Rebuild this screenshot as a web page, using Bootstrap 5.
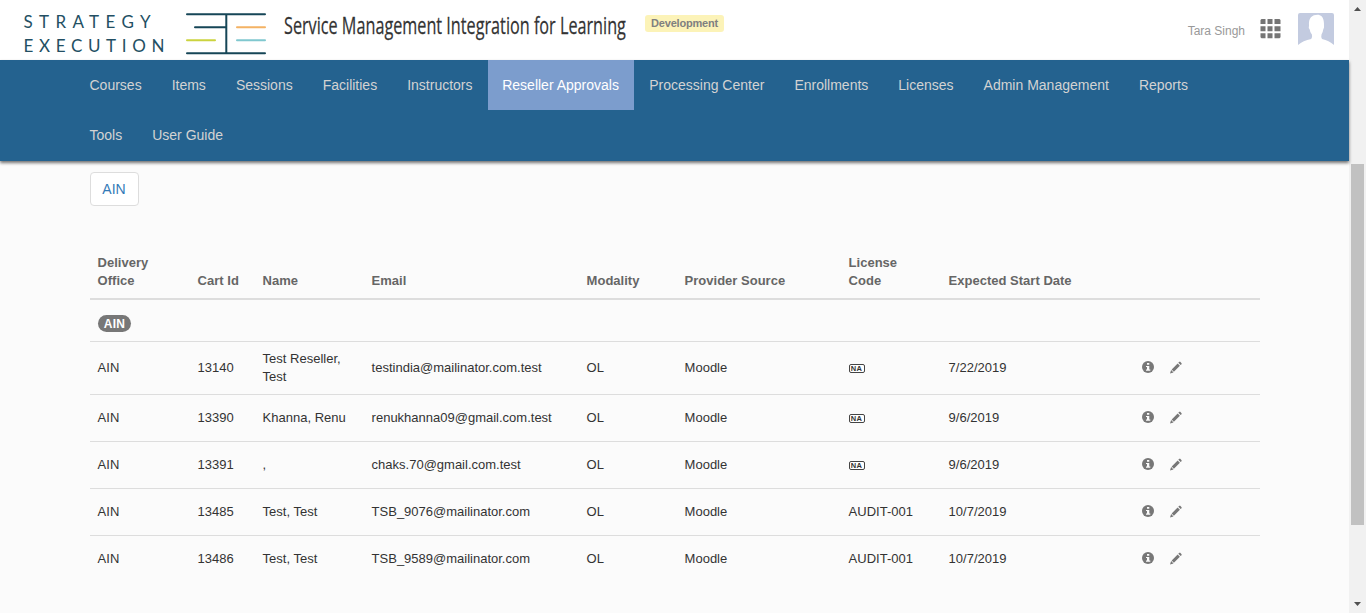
<!DOCTYPE html>
<html lang="en">
<head>
<meta charset="utf-8">
<meta name="viewport" content="width=device-width, initial-scale=1">
<title>Reseller Approvals</title>
<link href="https://cdn.jsdelivr.net/npm/bootstrap@5.3.0/dist/css/bootstrap.min.css" rel="stylesheet">
<style>
html, body { height: 100%; overflow: hidden; }
body { font-family: "Liberation Sans", Arial, sans-serif; font-size: 13px; line-height: 18px; color: #333; background: #fbfbfb; }
.page-head { height: 60px; background: #fff; padding-left: 22px; padding-right: 15px; }
.brand-logo { width: 246px; height: 60px; }
.app-title { width: 356px; height: 60px; margin-left: 10px; }
.env-label { margin: 15px 0 0 11px; width: 79px; height: 17px; line-height: 17px; font-size: 11px; letter-spacing: -.2px; border-radius: 3px; background: #fcf3b8; color: #808080; }
.user-name { font-size: 12px; color: #999; margin-top: 22px; }
.apps-icon { margin: 19px 0 0 15px; }
.avatar { margin: 13px 0 0 17px; }
.main-nav { height: 101px; background: #24628f; box-shadow: 0 2px 3px rgba(0,0,0,.55); }
.page-width { width: 1170px; margin-left: 90px; }
.main-nav .nav { margin-left: -15.5px; }
.main-nav .nav-link { font-size: 14px; line-height: 20px; padding: 15px; height: 50px; color: #d3d3d3; }
.main-nav .nav-link.active { color: #fff; background: #7c9dcd; padding: 15px 14.7px 15px 14.500px; margin: 0 .6px 0 .2px; }
.office-btn { margin-top: 11px; width: 49px; height: 34px; padding: 0 1px 0 0; font-size: 14px; line-height: 32px; color: #337ab7; background: #fff; border: 1px solid #ddd; border-radius: 4px; }
.approvals { margin: 39px 0 0; table-layout: fixed; --bs-table-bg: transparent; color: #333; --bs-table-color: #333; }
.approvals th, .approvals td { padding: 8px 7px 8px 7.6px; border-bottom: 1px solid #ddd; }
.approvals th { color: #666; border-bottom: 2px solid #ddd; vertical-align: bottom; letter-spacing: .01px; padding-top: 9px; }
.approvals tbody tr { height: 47px; }
.approvals tbody tr.group-row { height: 42px; }
.approvals .group-row td { padding: 15px 8px 8px; line-height: 0; }
.approvals tbody tr:last-child td { border-bottom: 0; }
.group-badge { display: inline-block; width: 33px; height: 17px; border-radius: 9px; background: #777; color: #fff; font-size: 12px; font-weight: 700; line-height: 18px; text-align: center; letter-spacing: .2px; }
.na-mark { display: block; width: 16px; height: 9px; margin-top: 2px; border: 1px solid #444; border-radius: 2px; background: #fff; font-size: 7.500px; font-weight: 700; line-height: 8px; text-align: center; letter-spacing: .4px; }
.row-tools { gap: 16px; margin-top: -1px; }
.scroll-rail { width: 17px; background: #f1f1f1; }
.scroll-thumb { width: 13px; height: 361px; margin-top: 148px; background: #c1c1c1; }
.rail-arrow { height: 16px; }
</style>
</head>
<body class="d-flex">
<svg width="0" height="0" class="position-absolute" aria-hidden="true">
<symbol id="i-info" viewBox="0 0 12 12"><circle cx="6" cy="6" r="6" fill="#777"/><path d="M5 2h2.3v1.700H5zM4 4.900h3.300v3.500H8.300v1.300H4V8.400h1V6H4z" fill="#fbfbfb"/></symbol>
<symbol id="i-pen" viewBox="0 0 13 13"><path d="M0 13l1.200-3.800 2.600 2.600zM1.800 8.600l6.500-6.500 2.400 2.400-6.500 6.500zM9 1.400l1-1q.5-.5 1.100 0l1.400 1.400q.4.600 0 1.100l-1 1z" fill="#777"/></symbol>
</svg>
<div class="flex-grow-1">
  <header class="page-head d-flex align-items-start">
    <svg class="brand-logo flex-shrink-0" viewBox="22 0 246 60">
      <g font-family="Lato" font-size="17" fill="#234f63">
        <text x="23.500" y="27.500" textLength="127" lengthAdjust="spacing">STRATEGY</text>
        <text x="23.500" y="52" textLength="141" lengthAdjust="spacing">EXECUTION</text>
      </g>
      <g stroke-width="2" stroke-linecap="round" fill="none"><path d="M187 14.300h78M195 27.300h31M187 53.300h78M226.300 14.300v39" stroke="#164657"/><path d="M237 27.300h28" stroke="#f4b264"/><path d="M187 40.300h28" stroke="#cbd33f"/><path d="M237 40.300h28" stroke="#80c8cf"/></g>
    </svg>
    <svg class="app-title flex-shrink-0" viewBox="278 0 356 60"><g transform="translate(284 34) scale(.66 1)"><text font-family="Open Sans" font-size="24" fill="#333" stroke="#333" stroke-width=".25" textLength="518" lengthAdjust="spacingAndGlyphs">Service Management Integration for Learning</text></g></svg>
    <span class="env-label fw-bold text-center">Development</span>
    <span class="user-name ms-auto">Tara Singh</span>
    <svg class="apps-icon" width="21" height="20" fill="#757575"><path d="M1.500 0h4v5h-5V1zM7.500 0h5v5h-5zM14.500 0h5l1 1v4h-6zM.5 7.300h5v5h-5zM7.500 7.300h5v5h-5zM14.500 7.300h6v5h-6zM.5 14.300h5v5h-4l-1-1zM7.500 14.300h5v5h-5zM14.500 14.300h6v4l-1 1h-5z"/></svg>
    <svg class="avatar" width="36" height="32"><path d="M2 0h32q2 0 2 2v30q-5-4.500-12-6-1.200-2-.5-4.500 1.500-2.500 1.800-5.200 1-1.300.7-3.200C26.300 5 24 2.500 20.500 1.700 14 1.500 10.500 4.500 11 12.500q-.7 2 .7 4 .3 3 2.300 5.200.5 2.500-.8 4.300Q5 27.500 0 32V2q0-2 2-2z" fill="#c3cbe0"/></svg>
  </header>
  <nav class="main-nav position-relative">
    <div class="page-width">
      <ul class="nav">
        <li class="nav-item"><a class="nav-link" href="#">Courses</a></li>
        <li class="nav-item"><a class="nav-link" href="#">Items</a></li>
        <li class="nav-item"><a class="nav-link" href="#">Sessions</a></li>
        <li class="nav-item"><a class="nav-link" href="#">Facilities</a></li>
        <li class="nav-item"><a class="nav-link" href="#">Instructors</a></li>
        <li class="nav-item"><a class="nav-link active" href="#">Reseller Approvals</a></li>
        <li class="nav-item"><a class="nav-link" href="#">Processing Center</a></li>
        <li class="nav-item"><a class="nav-link" href="#">Enrollments</a></li>
        <li class="nav-item"><a class="nav-link" href="#">Licenses</a></li>
        <li class="nav-item"><a class="nav-link" href="#">Admin Management</a></li>
        <li class="nav-item"><a class="nav-link" href="#">Reports</a></li>
        <li class="nav-item"><a class="nav-link" href="#">Tools</a></li>
        <li class="nav-item"><a class="nav-link" href="#">User Guide</a></li>
      </ul>
    </div>
  </nav>
  <main class="page-width">
    <button type="button" class="btn office-btn d-block">AIN</button>
    <table class="table approvals align-middle">
      <colgroup><col style="width:100px"><col style="width:65px"><col style="width:109px"><col style="width:215px"><col style="width:98px"><col style="width:164px"><col style="width:100px"><col style="width:193px"><col></colgroup>
      <thead><tr><th>Delivery<br>Office</th><th>Cart Id</th><th>Name</th><th>Email</th><th>Modality</th><th>Provider Source</th><th>License<br>Code</th><th>Expected Start Date</th><th></th></tr></thead>
      <tbody>
        <tr class="group-row"><td colspan="9"><span class="group-badge">AIN</span></td></tr>
        <tr><td>AIN</td><td>13140</td><td>Test Reseller, Test</td><td>testindia@mailinator.com.test</td><td>OL</td><td>Moodle</td><td><span class="na-mark">NA</span></td><td>7/22/2019</td><td><div class="d-flex row-tools"><svg width="12" height="12"><use href="#i-info"/></svg><svg width="12" height="13"><use href="#i-pen"/></svg></div></td></tr>
        <tr><td>AIN</td><td>13390</td><td>Khanna, Renu</td><td>renukhanna09@gmail.com.test</td><td>OL</td><td>Moodle</td><td><span class="na-mark">NA</span></td><td>9/6/2019</td><td><div class="d-flex row-tools"><svg width="12" height="12"><use href="#i-info"/></svg><svg width="12" height="13"><use href="#i-pen"/></svg></div></td></tr>
        <tr><td>AIN</td><td>13391</td><td>,</td><td>chaks.70@gmail.com.test</td><td>OL</td><td>Moodle</td><td><span class="na-mark">NA</span></td><td>9/6/2019</td><td><div class="d-flex row-tools"><svg width="12" height="12"><use href="#i-info"/></svg><svg width="12" height="13"><use href="#i-pen"/></svg></div></td></tr>
        <tr><td>AIN</td><td>13485</td><td>Test, Test</td><td>TSB_9076@mailinator.com</td><td>OL</td><td>Moodle</td><td>AUDIT-001</td><td>10/7/2019</td><td><div class="d-flex row-tools"><svg width="12" height="12"><use href="#i-info"/></svg><svg width="12" height="13"><use href="#i-pen"/></svg></div></td></tr>
        <tr><td>AIN</td><td>13486</td><td>Test, Test</td><td>TSB_9589@mailinator.com</td><td>OL</td><td>Moodle</td><td>AUDIT-001</td><td>10/7/2019</td><td><div class="d-flex row-tools"><svg width="12" height="12"><use href="#i-info"/></svg><svg width="12" height="13"><use href="#i-pen"/></svg></div></td></tr>
      </tbody>
    </table>
  </main>
</div>
<aside class="scroll-rail flex-shrink-0 d-flex flex-column align-items-center vh-100">
  <svg class="rail-arrow" width="17" height="16"><path d="M5 11l3.500-4 3.500 4z" fill="#505050"/></svg>
  <div class="scroll-thumb"></div>
  <svg class="rail-arrow mt-auto" width="17" height="16"><path d="M5 5h7L8.500 9z" fill="#505050"/></svg>
</aside>
<script src="https://cdn.jsdelivr.net/npm/bootstrap@5.3.0/dist/js/bootstrap.bundle.min.js"></script>
</body>
</html>
